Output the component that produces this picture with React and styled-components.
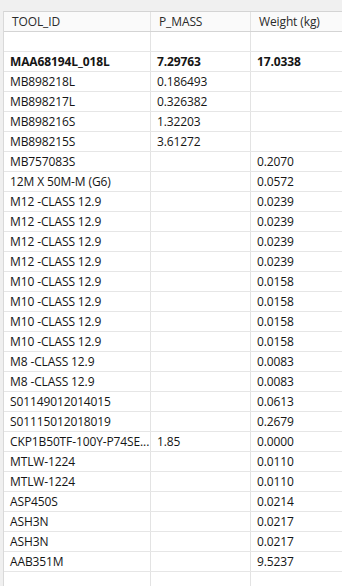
import React from "react";
import styled, { createGlobalStyle } from "styled-components";

const GlobalStyle = createGlobalStyle`
  html, body {
    margin: 0;
    padding: 0;
    background: #ffffff;
  }
  body {
    font-family: "Open Sans", "Noto Sans", sans-serif;
  }
`;

// rows of the grid: [tool id, p_mass, weight, bold]
const rows = [
  ["", "", ""],
  ["MAA68194L_018L", "7.29763", "17.0338", true],
  ["MB898218L", "0.186493", ""],
  ["MB898217L", "0.326382", ""],
  ["MB898216S", "1.32203", ""],
  ["MB898215S", "3.61272", ""],
  ["MB757083S", "", "0.2070"],
  ["12M X 50M-M (G6)", "", "0.0572"],
  ["M12 -CLASS 12.9", "", "0.0239"],
  ["M12 -CLASS 12.9", "", "0.0239"],
  ["M12 -CLASS 12.9", "", "0.0239"],
  ["M12 -CLASS 12.9", "", "0.0239"],
  ["M10 -CLASS 12.9", "", "0.0158"],
  ["M10 -CLASS 12.9", "", "0.0158"],
  ["M10 -CLASS 12.9", "", "0.0158"],
  ["M10 -CLASS 12.9", "", "0.0158"],
  ["M8 -CLASS 12.9", "", "0.0083"],
  ["M8 -CLASS 12.9", "", "0.0083"],
  ["S01149012014015", "", "0.0613"],
  ["S01115012018019", "", "0.2679"],
  ["CKP1B50TF-100Y-P74SE...", "1.85", "0.0000"],
  ["MTLW-1224", "", "0.0110"],
  ["MTLW-1224", "", "0.0110"],
  ["ASP450S", "", "0.0214"],
  ["ASH3N", "", "0.0217"],
  ["ASH3N", "", "0.0217"],
  ["AAB351M", "", "9.5237"],
  ["", "", ""],
];

const Page = styled.div`
  width: 342px;
  height: 586px;
  overflow: hidden;
  background: #f0f0f0;
  padding-top: 11px;
  box-sizing: border-box;
`;

const Grid = styled.div`
  margin-left: 3px;
  background: #ffffff;
  border-left: 1px solid #d9d9d9;
  border-top: 1px solid #d4d4d4;
`;

const Row = styled.div`
  display: grid;
  grid-template-columns: 147px 100px 100px;
  height: 20px;
  box-sizing: border-box;
  border-bottom: 1px solid ${(p) => (p.$head ? "#d4d4d4" : "#e6e6e6")};
  background: ${(p) => (p.$head ? "#fafafa" : "#ffffff")};
`;

const Cell = styled.div`
  display: flex;
  align-items: center;
  padding-left: ${(p) => (p.$head ? "8px" : "6px")};
  border-right: 1px solid #e3e3e3;
  font-size: 12px;
  font-weight: ${(p) => (p.$bold ? 700 : 400)};
  color: ${(p) => (p.$head ? "#2a2a2a" : "#151515")};
  white-space: nowrap;
  overflow: hidden;
  line-height: 19px;
  letter-spacing: -0.12px;
`;

export default function App() {
  return (
    <Page>
      <GlobalStyle />
      <Grid>
        <Row $head>
          <Cell $head>TOOL_ID</Cell>
          <Cell $head>P_MASS</Cell>
          <Cell $head>Weight (kg)</Cell>
        </Row>
        {rows.map((r, i) => (
          <Row key={i}>
            <Cell $bold={r[3]}>{r[0]}</Cell>
            <Cell $bold={r[3]}>{r[1]}</Cell>
            <Cell $bold={r[3]}>{r[2]}</Cell>
          </Row>
        ))}
      </Grid>
    </Page>
  );
}
